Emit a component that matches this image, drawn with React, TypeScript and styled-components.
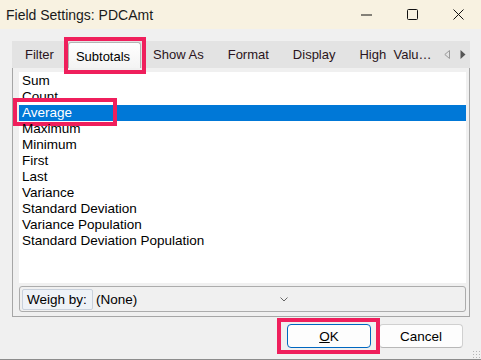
import React from "react";
import styled, { createGlobalStyle } from "styled-components";

const Global = createGlobalStyle`
  html, body { margin: 0; padding: 0; background: #f0f0f0; }
  body { font-family: "Liberation Sans", Arial, sans-serif; font-size: 13px; color: #000; }
  * { box-sizing: border-box; }
`;

const Window = styled.div`
  width: 481px;
  height: 360px;
  display: flex;
  flex-direction: column;
  background: #f0f0f0;
  border-bottom: 1px solid #8c8c8c;
  position: relative;
  overflow: hidden;
`;

const TitleBar = styled.div`
  height: 29px;
  flex: none;
  background: #f8f2e1;
  display: flex;
  align-items: center;
  padding-left: 6px;
`;

const Title = styled.span`
  flex: 1;
  font-size: 14px;
  color: #1a1a1a;
`;

const Caption = styled.div`
  width: 46px;
  height: 29px;
  display: flex;
  align-items: center;
  justify-content: center;
`;

const Body = styled.div`
  flex: 1;
  display: flex;
  flex-direction: column;
  padding: 12px 11px 0 12px;
`;

const TabStrip = styled.div`
  height: 27px;
  background: #e3e3e3;
  display: flex;
  align-items: stretch;
  padding-left: 1px;
  position: relative;
  z-index: 1;
  margin-bottom: -1px;
`;

const Tab = styled.div<{ $active?: boolean }>`
  position: relative;
  display: flex;
  align-items: center;
  padding: 0 12px;
  font-size: 13px;
  color: ${(p) => (p.$active ? "#000" : "#2a1420")};
  white-space: nowrap;
  ${(p) =>
    p.$active &&
    `
    margin-top: 1px;
    background: linear-gradient(#ffffff, #f3f3f3);
    border: 1px solid #b4b4b4;
    border-bottom: none;
    border-radius: 3px 3px 0 0;
    padding: 1px 10px 0 7px;
    margin-left: 2px;
    margin-right: 0px;
  `}
`;

const TabArrows = styled.div`
  margin-left: auto;
  display: flex;
  align-items: center;
  gap: 10px;
  padding-right: 5px;
`;

const Highlight = styled.div<{ $t: number; $r: number; $b: number; $l: number }>`
  position: absolute;
  top: ${(p) => p.$t}px;
  right: ${(p) => p.$r}px;
  bottom: ${(p) => p.$b}px;
  left: ${(p) => p.$l}px;
  border: 4px solid #ef1f5c;
  pointer-events: none;
  z-index: 5;
`;

const Panel = styled.div`
  height: 250px;
  border: 1px solid #a6a6a6;
  display: flex;
  flex-direction: column;
  padding: 4px 3px 3px 6px;
  gap: 3px;
`;

const ListBox = styled.div`
  height: 211px;
  background: #fff;
  padding-top: 1px;
  display: flex;
  flex-direction: column;
`;

const Item = styled.div<{ $selected?: boolean }>`
  position: relative;
  height: 16px;
  line-height: 16px;
  padding-left: 3px;
  font-size: 13.5px;
  background: ${(p) => (p.$selected ? "#0078d7" : "transparent")};
  color: ${(p) => (p.$selected ? "#fff" : "#000")};
`;

const ItemMark = styled.div`
  position: absolute;
  left: -6px;
  top: -7px;
  width: 104px;
  height: 28px;
  border: 4px solid #ef1f5c;
  pointer-events: none;
`;

const WeighRow = styled.div`
  height: 26px;
  border: 1px solid #acacac;
  border-radius: 3px;
  display: flex;
  align-items: center;
  padding: 0 2px;
`;

const WeighLabel = styled.div`
  height: 21px;
  width: 71px;
  display: flex;
  align-items: center;
  padding-left: 4px;
  background: #eef2f7;
  border: 1px solid #c9d1dc;
  border-radius: 2px;
  font-size: 13.5px;
`;

const WeighValue = styled.div`
  margin-left: 3px;
  width: 184px;
  font-size: 13.5px;
`;

const Buttons = styled.div`
  display: flex;
  justify-content: flex-end;
  gap: 8px;
  padding: 7px 7px 0 0;
`;

const Button = styled.button<{ $default?: boolean }>`
  position: relative;
  width: 84px;
  height: 24px;
  font-family: inherit;
  font-size: 13.5px;
  color: #000;
  background: #fdfdfd;
  border: 1px solid ${(p) => (p.$default ? "#0067c0" : "#d0d0d0")};
  border-bottom-color: ${(p) => (p.$default ? "#0067c0" : "#b8b8b8")};
  border-radius: 4px;
  padding: 0;
`;

const Grip = styled.div`
  position: absolute;
  right: 1px;
  bottom: 1px;
  width: 8px;
  height: 8px;
  background-image: radial-gradient(#b5b5b5 40%, transparent 41%);
  background-size: 3px 3px;
`;

const items = [
  "Sum",
  "Count",
  "Average",
  "Maximum",
  "Minimum",
  "First",
  "Last",
  "Variance",
  "Standard Deviation",
  "Variance Population",
  "Standard Deviation Population",
];

export default function App() {
  return (
    <>
      <Global />
      <Window>
        <TitleBar>
          <Title>Field Settings: PDCAmt</Title>
          <Caption>
            <svg width="11" height="2" viewBox="0 0 11 2">
              <rect x="0" y="0.5" width="11" height="1" fill="#111" />
            </svg>
          </Caption>
          <Caption>
            <svg width="11" height="11" viewBox="0 0 11 11">
              <rect x="0.5" y="0.5" width="10" height="10" rx="1" fill="none" stroke="#111" />
            </svg>
          </Caption>
          <Caption>
            <svg width="11" height="11" viewBox="0 0 11 11">
              <path d="M0.5 0.5 L10.5 10.5 M10.5 0.5 L0.5 10.5" stroke="#111" strokeWidth="1" />
            </svg>
          </Caption>
        </TitleBar>
        <Body>
          <TabStrip>
            <Tab>Filter</Tab>
            <Tab $active>
              Subtotals
              <Highlight $t={-6} $r={-6} $b={-6} $l={-5} />
            </Tab>
            <Tab>Show As</Tab>
            <Tab>Format</Tab>
            <Tab>Display</Tab>
            <Tab>High&nbsp; Valu…</Tab>
            <TabArrows>
              <svg width="6" height="9" viewBox="0 0 6 9">
                <path d="M5.5 0.5 L0.8 4.5 L5.5 8.5 Z" fill="none" stroke="#9a9a9a" />
              </svg>
              <svg width="6" height="9" viewBox="0 0 6 9">
                <path d="M0.5 0 L5.5 4.5 L0.5 9 Z" fill="#555" />
              </svg>
            </TabArrows>
          </TabStrip>
          <Panel>
            <ListBox>
              {items.map((it) => (
                <Item key={it} $selected={it === "Average"}>
                  {it}
                  {it === "Average" && <ItemMark />}
                </Item>
              ))}
            </ListBox>
            <WeighRow>
              <WeighLabel>Weigh by:</WeighLabel>
              <WeighValue>(None)</WeighValue>
              <svg width="8" height="5" viewBox="0 0 8 5">
                <path d="M0.5 0.5 L4 4 L7.5 0.5" fill="none" stroke="#666" />
              </svg>
            </WeighRow>
          </Panel>
          <Buttons>
            <Button $default>
              <u>O</u>K
              <Highlight $t={-7} $r={-10} $b={-7} $l={-11} />
            </Button>
            <Button>Cancel</Button>
          </Buttons>
        </Body>
        <Grip />
      </Window>
    </>
  );
}
